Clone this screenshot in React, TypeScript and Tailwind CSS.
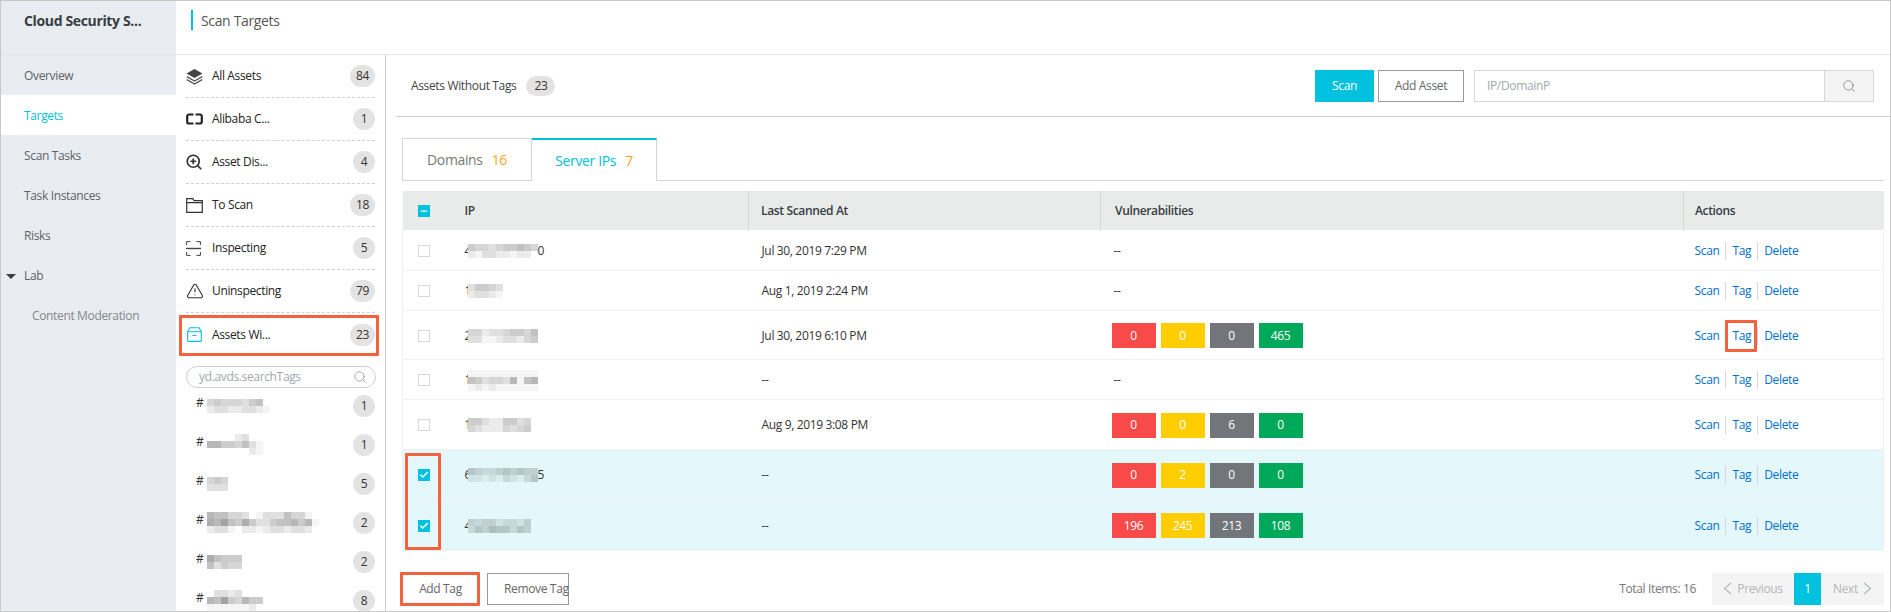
import { Search, Check, Minus, TriangleAlert, ZoomIn } from "lucide-react";

const NAV = ["Overview", "Targets", "Scan Tasks", "Task Instances", "Risks"];

// each digit is how dark a cell of the blurred patch is, 0 = empty
function Mosaic({ rows, className = "" }: { rows: string[]; className?: string }) {
  const cols = Math.max(...rows.map((r) => r.length));
  return (
    <svg width={cols * 7} height={rows.length * 7} className={`block shrink-0 ${className}`}>
      {rows.map((row, y) =>
        row.split("").map((c, x) => (
          <rect key={`${x}-${y}`} x={x * 7} y={y * 7} width={7} height={7} fill="#000" fillOpacity={Number(c) * 0.04} />
        )),
      )}
    </svg>
  );
}

function Badge({ n }: { n: number }) {
  return (
    <span className="flex h-[22px] min-w-[22px] items-center justify-center rounded-full bg-[#e3e3e3] px-[6px] text-[#333]">
      {n}
    </span>
  );
}

function LayersIcon() {
  return (
    <svg width="17" height="17" viewBox="0 0 17 17">
      <path d="M8.5 1 16.5 5.5 8.5 10 .5 5.5Z" fill="#444" />
      <path d="M.8 8.6 8.5 13l7.7-4.4M.8 11.6 8.5 16l7.700-4.400" fill="none" stroke="#555" strokeWidth="1.3" />
    </svg>
  );
}

function BracketIcon() {
  return (
    <svg width="17" height="12" viewBox="0 0 17 12">
      <path d="M7.500 1.500H3A1.800 1.800 0 0 0 1.200 3.300v5.400A1.800 1.800 0 0 0 3 10.500h4.500M9.500 1.500H14a1.800 1.800 0 0 1 1.800 1.800v5.400a1.800 1.800 0 0 1-1.800 1.800H9.500" fill="none" stroke="#222" strokeWidth="2.200" />
    </svg>
  );
}

function FolderIcon() {
  return (
    <svg width="17" height="15" viewBox="0 0 17 15">
      <path d="M.7.7h6l1.4 2h8.200v11.600H.7ZM.7 4.600h15.600" fill="none" stroke="#333" strokeWidth="1.200" />
    </svg>
  );
}

function ScanIcon() {
  return (
    <svg width="15" height="15" viewBox="0 0 15 15">
      <path d="M.6 4V.6h4M10.400.6h4V4M.6 11v3.400h4M10.400 14.400h4V11" fill="none" stroke="#444" strokeWidth="1" />
      <path d="M0 7.500h15" stroke="#444" strokeWidth="1.400" />
    </svg>
  );
}

function ArchiveIcon() {
  return (
    <svg width="15" height="15" viewBox="0 0 15 15">
      <path d="M3 .7h9l2.300 3.600v9.100a1 1 0 0 1-1 1H1.700a1 1 0 0 1-1-1V4.300ZM.7 4.800h13.600M5.500 8.500h4" fill="none" stroke="#00c1de" strokeWidth="1.100" />
    </svg>
  );
}

function PagerChevron({ right = false }: { right?: boolean }) {
  return (
    <svg width="9" height="13" viewBox="0 0 9 13">
      <path d={right ? "M1 1l6.500 5.500L1 12" : "M8 1 1.500 6.500 8 12"} fill="none" stroke="#b4b7b9" strokeWidth="1.200" />
    </svg>
  );
}

const ASSETS = [
  { label: "All Assets", n: 84, icon: <LayersIcon /> },
  { label: "Alibaba C...", n: 1, icon: <BracketIcon /> },
  { label: "Asset Dis...", n: 4, icon: <ZoomIn size={18} strokeWidth={2.300} color="#333" className="-ml-px" /> },
  { label: "To Scan", n: 18, icon: <FolderIcon /> },
  { label: "Inspecting", n: 5, icon: <ScanIcon /> },
  { label: "Uninspecting", n: 79, icon: <TriangleAlert size={18} strokeWidth={1.500} color="#333" /> },
];

const TAGS: { n: number; rows: string[] }[] = [
  { n: 1, rows: ["45444356", "2332233210"] },
  { n: 1, rows: ["0000230", "7755463100", "000000210"] },
  { n: 5, rows: ["454", "333"] },
  { n: 2, rows: ["7664430133364410", "8796585335667571", "2331022123323320"] },
  { n: 2, rows: ["86555", "63544"] },
  { n: 8, rows: ["03323", "76954755", "11111120"] },
];

type Row = {
  first: string;
  rows: string[];
  last?: string;
  scanned: string;
  vuln?: number[];
  selected?: boolean;
  height: string;
  tagged?: boolean;
};

const ROWS: Row[] = [
  { first: "4", rows: ["5443455654", "2133221220"], last: "0", scanned: "Jul 30, 2019 7:29 PM", height: "h-[40px]" },
  { first: "1", rows: ["35543", "23321"], scanned: "Aug 1, 2019 2:24 PM", height: "h-[40px]" },
  { first: "2", rows: ["4423345546", "3311233245"], scanned: "Jul 30, 2019 6:10 PM", vuln: [0, 0, 0, 465], height: "h-[49px]", tagged: true },
  { first: "1", rows: ["1111111111", "6534437167", "1212111111"], scanned: "--", height: "h-[40px]" },
  { first: "1", rows: ["553225534", "432224345"], scanned: "Aug 9, 2019 3:08 PM", vuln: [0, 0, 6, 0], height: "h-[50px]" },
  { first: "6", rows: ["5433454544", "2212132135"], last: "5", scanned: "--", vuln: [0, 2, 0, 0], selected: true, height: "h-[50px]" },
  { first: "4", rows: ["434423324", "354655354"], scanned: "--", vuln: [196, 245, 213, 108], selected: true, height: "h-[51px]" },
];

const VULN_COLORS = ["bg-[#f94a4a]", "bg-[#ffcd00]", "bg-[#72767a]", "bg-[#00a85a]"];

export default function App() {
  return (
    <div className="relative h-[612px] w-[1891px] overflow-hidden border border-[#c8c8c8] bg-white font-['Open_Sans',sans-serif] text-[12px] tracking-[-0.35px] text-[#333]">
      <div className="flex h-full">
        {/* left nav */}
        <aside className="flex w-[175px] shrink-0 flex-col bg-[#e9ecf1]">
          <div className="h-[53px] pl-[23px] pt-[10px] text-[14px] font-bold leading-[19px] text-[#373d41]">Cloud Security S...</div>
          <div className="h-px bg-[#e4e4e4]" />
          {NAV.map((item) => (
            <div
              key={item}
              className={`flex h-[40px] items-center pl-[23px] pt-[2px] ${item === "Targets" ? "bg-white text-[#00c1de]" : "text-[#5f6468]"}`}
            >
              {item}
            </div>
          ))}
          <div className="flex h-[40px] items-center pt-[2px] text-[#5f6468]">
            <span className="ml-[5px] mr-[8px] h-0 w-0 border-x-[5px] border-t-[5px] border-x-transparent border-t-[#373d41]" />
            Lab
          </div>
          <div className="flex h-[40px] items-center pl-[31px] pt-[2px] text-[#84888b]">Content Moderation</div>
        </aside>

        <div className="flex min-w-0 flex-1 flex-col">
          <header className="h-[53px] shrink-0 pl-[15px] pt-[9px]">
            <div className="flex h-[20px] items-center border-l-2 border-[#00c1de] pl-[8px] text-[14px] text-[#555]">Scan Targets</div>
          </header>
          <div className="h-px shrink-0 bg-[#e8e8e8]" />

          <div className="flex min-h-0 flex-1">
            {/* asset groups */}
            <div className="w-[210px] shrink-0 border-r border-[#cccccc] px-[10px]">
              {ASSETS.map((a) => (
                <div key={a.label} className="flex h-[43px] items-center border-b border-dashed border-[#cfcfcf]">
                  <span className="flex w-[26px] shrink-0 items-center">{a.icon}</span>
                  <span className="flex-1 text-[#222]">{a.label}</span>
                  <Badge n={a.n} />
                </div>
              ))}
              <div className="relative flex h-[43px] items-center">
                <span className="flex w-[26px] shrink-0 items-center pl-px"><ArchiveIcon /></span>
                <span className="flex-1 text-[#222]">Assets Wi...</span>
                <Badge n={23} />
                <span className="absolute -left-[7px] -right-[4px] bottom-0 top-[2px] rounded-[1px] border-[3px] border-[#f4623d]" />
              </div>
              <div className="mt-[10px] flex h-[22px] w-[190px] items-center rounded-full border border-[#cfcfcf] pl-[12px] pr-[8px] text-[#a3a7aa]">
                <span className="flex-1">yd.avds.searchTags</span>
                <Search size={14} strokeWidth={1.300} color="#8b8f92" />
              </div>
              <div className="-mt-[2px]">
                {TAGS.map((t, i) => (
                  <div key={i} className="flex h-[39px] items-center">
                    <span className="-mt-[5px] ml-[10px] w-[11px] shrink-0 text-[#333]">#</span>
                    <div className="flex-1">
                      <Mosaic rows={t.rows} />
                    </div>
                    <Badge n={t.n} />
                  </div>
                ))}
              </div>
            </div>

            {/* main panel */}
            <main className="flex min-w-0 flex-1 flex-col">
              <div className="ml-[10px] flex h-[62px] shrink-0 items-center border-b border-[#cccccc] pr-[16px]">
                <span className="ml-[15px] mr-[10px] text-[#444]">Assets Without Tags</span>
                <span className="flex h-[20px] w-[29px] items-center justify-center rounded-full bg-[#e3e3e3]">23</span>
                <button className="ml-auto h-[32px] w-[59px] bg-[#00c1de] text-white">Scan</button>
                <button className="ml-[4px] h-[32px] w-[86px] border border-[#999] text-[#666]">Add Asset</button>
                <div className="ml-[10px] flex h-[32px] w-[400px] border border-[#d7d7d7]">
                  <span className="flex flex-1 items-center pl-[12px] text-[#a3a7aa]">IP/DomainP</span>
                  <span className="flex w-[49px] items-center justify-center border-l border-[#d7d7d7] bg-[#f4f4f4]">
                    <Search size={14} strokeWidth={1.300} color="#777" />
                  </span>
                </div>
              </div>

              <div className="flex min-h-0 flex-1 flex-col pl-[16px] pr-[6px] pt-[21px]">
                <div className="flex h-[43px] shrink-0 border-b border-[#d4d4d4]">
                  <div className="flex h-[43px] w-[130px] items-center justify-center gap-[9px] border border-[#d4d4d4] text-[14px] text-[#777]">
                    Domains <span className="text-[#f5a623]">16</span>
                  </div>
                  <div className="flex h-[43px] w-[125px] items-center justify-center gap-[9px] border-r border-t-2 border-r-[#d4d4d4] border-t-[#00c1de] bg-white text-[14px] text-[#00c1de]">
                    Server IPs <span className="text-[#f5a623]">7</span>
                  </div>
                </div>

                <table className="mt-[10px] w-[1481px] table-fixed border-collapse">
                  <colgroup>
                    <col className="w-[62px]" />
                    <col className="w-[284px]" />
                    <col className="w-[352px]" />
                    <col className="w-[583px]" />
                    <col className="w-[200px]" />
                  </colgroup>
                  <thead>
                    <tr className="h-[39px] bg-[#e9ebeb] text-left font-semibold text-[#373d41]">
                      <th className="pl-[15px]">
                        <span className="flex h-[12px] w-[12px] items-center justify-center bg-[#00c1de]">
                          <Minus size={10} strokeWidth={3} color="#fff" />
                        </span>
                      </th>
                      <th className="font-semibold">IP</th>
                      <th className="border-l border-[#d4d6d6] pl-[12px] font-semibold">Last Scanned At</th>
                      <th className="border-l border-[#d4d6d6] pl-[14px] font-semibold">Vulnerabilities</th>
                      <th className="border-l border-[#d4d6d6] pl-[11px] font-semibold">Actions</th>
                    </tr>
                  </thead>
                  <tbody>
                    {ROWS.map((r, i) => (
                      <tr key={i} className={`${r.height} border-b border-x border-[#f0f0f0] ${r.selected ? "bg-[#e4f7fb]" : "bg-white"}`}>
                        <td className="pl-[15px] pt-[2px]">
                          {r.selected ? (
                            <span className="flex h-[12px] w-[12px] items-center justify-center bg-[#00c1de]">
                              <Check size={10} strokeWidth={3.500} color="#fff" />
                            </span>
                          ) : (
                            <span className="block h-[12px] w-[12px] border border-[#d7d7d7] bg-white" />
                          )}
                        </td>
                        <td className="pt-[2px]">
                          <div className="flex items-center">
                            <span className="w-[7px]">{r.first}</span>
                            <Mosaic rows={r.rows} className={`-ml-[4px] ${r.selected ? "bg-[#e4f7fb]" : "bg-white"}`} />
                            {r.last && <span>{r.last}</span>}
                          </div>
                        </td>
                        <td className="pl-[13px] pt-[2px]">{r.scanned}</td>
                        <td className="pl-[13px] pt-[2px]">
                          {r.vuln ? (
                            <div className="-ml-[2px] flex gap-[5px]">
                              {r.vuln.map((v, j) => (
                                <span key={j} className={`flex h-[25px] w-[44px] items-center justify-center text-white ${VULN_COLORS[j]}`}>
                                  {v}
                                </span>
                              ))}
                            </div>
                          ) : (
                            "--"
                          )}
                        </td>
                        <td className="pl-[11px] pt-[2px]">
                          <div className="flex items-center text-[#0070cc]">
                            <span>Scan</span>
                            <span className="relative ml-[6px] flex items-center border-l border-[#d7d7d7] pl-[6px]">
                              Tag
                              {r.tagged && (
                                <span className="absolute -bottom-[7px] -left-px -right-[6px] -top-[7px] rounded-[1px] border-[3px] border-[#f4623d]" />
                              )}
                            </span>
                            <span className="ml-[6px] border-l border-[#d7d7d7] pl-[6px]">Delete</span>
                          </div>
                        </td>
                      </tr>
                    ))}
                  </tbody>
                </table>

                <div className="mt-[22px] flex h-[32px] shrink-0 items-center">
                  <button className="relative h-[32px] w-[77px] text-[#666]">
                    Add Tag
                    <span className="absolute -bottom-px -left-[2px] -right-px -top-px rounded-[1px] border-[3px] border-[#f4623d]" />
                  </button>
                  <button className="ml-[8px] h-[32px] w-[82px] whitespace-nowrap border border-[#999] pl-[16px] text-left text-[#666]">Remove Tag</button>
                  <span className="ml-auto mr-[16px] text-[#777]">Total Items: 16</span>
                  <span className="flex h-[32px] w-[82px] items-center justify-center gap-[5px] bg-[#f4f4f4] text-[#b4b7b9]">
                    <PagerChevron />
                    Previous
                  </span>
                  <span className="flex h-[32px] w-[27px] items-center justify-center bg-[#00c1de] text-white">1</span>
                  <span className="flex h-[32px] w-[63px] items-center justify-center gap-[5px] bg-[#f4f4f4] text-[#b4b7b9]">
                    Next
                    <PagerChevron right />
                  </span>
                </div>
              </div>
            </main>
          </div>
        </div>
      </div>

      {/* annotation frame over the two checked rows */}
      <span className="absolute left-[404px] top-[452px] h-[97px] w-[36px] rounded-[1px] border-[3px] border-[#f4623d]" />
    </div>
  );
}
